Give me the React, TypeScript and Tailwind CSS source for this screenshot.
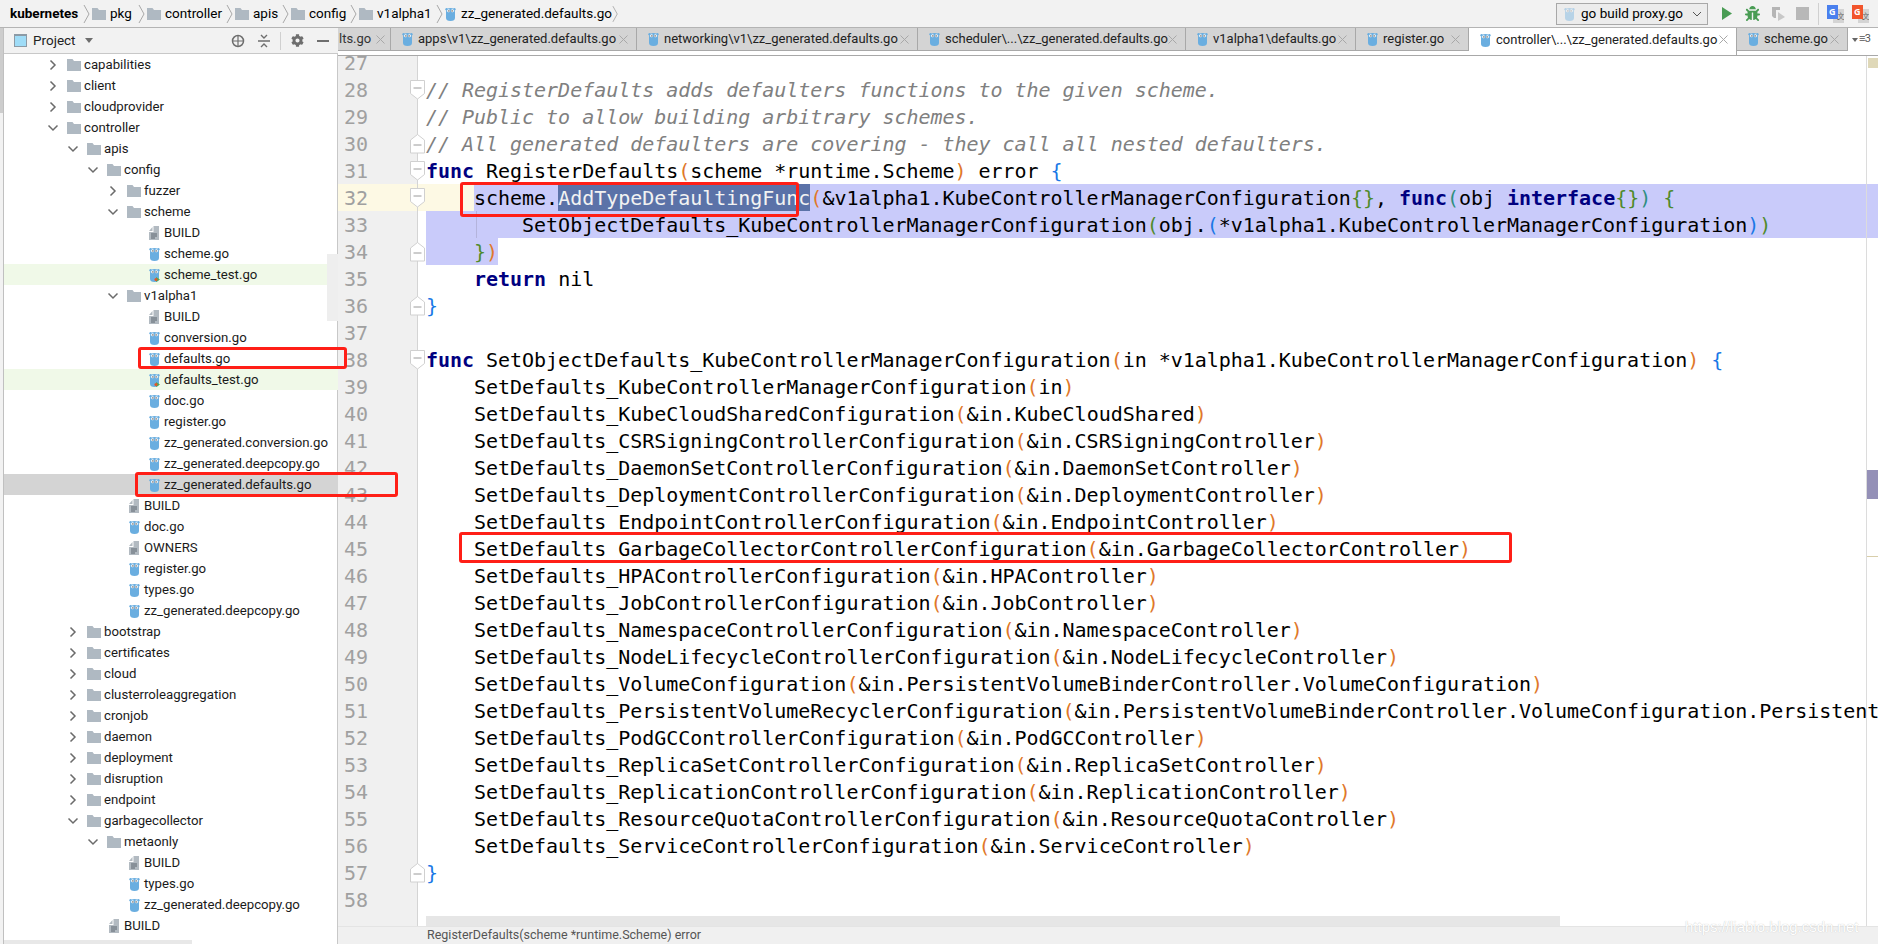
import { FaBug, FaCog } from "react-icons/fa";

const UI = "font-['Roboto',sans-serif]";

function Gopher({ test, faded }: { test?: boolean; faded?: boolean }) {
  return (
    <svg width="11" height="14" viewBox="0 0 11 14" className={faded ? "shrink-0 opacity-40" : "shrink-0"}>
      <circle cx="1.6" cy="2.2" r="1.2" fill="#6aaee0" />
      <circle cx="9.4" cy="2.2" r="1.2" fill="#6aaee0" />
      <path d="M1 4.500C1 2 3 1 5.500 1S10 2 10 4.500V11c0 2-1.500 3-4.500 3S1 13 1 11Z" fill="#6aaee0" />
      <circle cx="3.6" cy="3.8" r="1.5" fill="#fff" />
      <circle cx="7.4" cy="3.8" r="1.5" fill="#fff" />
      <circle cx="3.9" cy="3.9" r=".7" fill="#333" />
      <circle cx="7.1" cy="3.9" r=".7" fill="#333" />
      {test && <path d="M7 9l4 2.500L7 14Z" fill="#4caf50" />}
      {test && <circle cx="7" cy="11.5" r="1.6" fill="#e0562b" />}
    </svg>
  );
}

function Folder() {
  return (
    <svg width="14" height="12" viewBox="0 0 14 12" className="shrink-0">
      <path d="M0 0h5.500l1.500 2H14v10H0Z" fill="#afb9c2" />
    </svg>
  );
}

function FileIcon() {
  return (
    <svg width="14" height="14" viewBox="0 0 14 14" className="shrink-0">
      <path d="M2 5 5.500 1V5ZM6.500 0H12v14H2V6h4.500Z" fill="#b2bac1" />
      <path d="M4 8h6M4 10h6M4 12h4" stroke="#5d6670" strokeWidth="1" />
    </svg>
  );
}

function Chevron({ open }: { open?: boolean }) {
  return (
    <svg width="12" height="12" viewBox="0 0 12 12" className="shrink-0">
      {open ? (
        <path d="M1.500 3.500 6 8l4.500-4.500" fill="none" stroke="#6b6b6b" strokeWidth="1.500" />
      ) : (
        <path d="M3.500 1.500 8 6l-4.500 4.500" fill="none" stroke="#6b6b6b" strokeWidth="1.500" />
      )}
    </svg>
  );
}

function Crumb({ name, w, bold, icon }: { name: string; w: number; bold?: boolean; icon?: "folder" | "go" }) {
  return (
    <div className="flex items-center shrink-0" style={{ width: w }}>
      {icon === "folder" && <Folder />}
      {icon === "go" && <Gopher />}
      <span className={bold ? "ml-[10px] font-bold text-black" : icon === "go" ? "ml-[5px] text-black" : "ml-[4px] text-black"}>{name}</span>
      <svg width="8" height="20" viewBox="0 0 8 20" className="ml-auto mr-[1px]">
        <path d="M1 1l5 9-5 9" fill="none" stroke="#a8a8a8" strokeWidth="1" />
      </svg>
    </div>
  );
}

function TopBar() {
  return (
    <div className={`h-[28px] shrink-0 flex items-center bg-[#f2f2f2] border-b border-[#b4b4b4] text-[13.500px] ${UI}`}>
      <Crumb name="kubernetes" w={92} bold />
      <Crumb name="pkg" w={55} icon="folder" />
      <Crumb name="controller" w={88} icon="folder" />
      <Crumb name="apis" w={56} icon="folder" />
      <Crumb name="config" w={68} icon="folder" />
      <Crumb name="v1alpha1" w={86} icon="folder" />
      <Crumb name="zz_generated.defaults.go" w={175} icon="go" />
      <div className="ml-auto flex items-center pr-[9px]">
        <div className="w-[152px] h-[22px] flex items-center bg-[#ececec] border border-[#a8a8a8] pl-[7px]">
          <Gopher faded />
          <span className="ml-[6px] text-[13.500px] text-black whitespace-nowrap">go build proxy.go</span>
          <svg width="10" height="6" viewBox="0 0 10 6" className="ml-auto mr-[5px]">
            <path d="M1 1l4 4 4-4" fill="none" stroke="#555" strokeWidth="1" />
          </svg>
        </div>
        <svg width="12" height="15" viewBox="0 0 12 15" className="ml-[13px]">
          <path d="M1 1l10 6.500L1 14Z" fill="#499c54" />
        </svg>
        <FaBug className="ml-[12px] text-[15px] text-[#499c54]" />
        <svg width="16" height="16" viewBox="0 0 16 16" className="ml-[10px]">
          <path d="M2 1h8v3H6v8H4L2 10Z" fill="#b5b5b5" />
          <path d="M8 6l7 5-7 4Z" fill="#c8c8c8" />
        </svg>
        <div className="ml-[10px] w-[13px] h-[13px] bg-[#b8b8b8]" />
        <div className="ml-[9px] w-[1px] h-[22px] bg-[#d0d0d0]" />
        <Translate color="#4a80ee" />
        <Translate color="#f2552c" />
      </div>
    </div>
  );
}

function Translate({ color }: { color: string }) {
  return (
    <svg width="17" height="18" viewBox="0 0 17 18" className="ml-[8px]">
      <rect x="6" y="4" width="11" height="14" fill="#d4d4d4" />
      <text x="10" y="14" fontSize="8" fill="#666" fontFamily="Noto Sans">文</text>
      <rect width="11" height="14" fill={color} />
      <text x="2" y="10" fontSize="9" fontWeight="700" fill="#fff" fontFamily="Noto Sans">G</text>
    </svg>
  );
}

const rows: [number, "d" | "o" | "f" | "g" | "t", string][] = [
  [0, "d", "capabilities"],
  [0, "d", "client"],
  [0, "d", "cloudprovider"],
  [0, "o", "controller"],
  [1, "o", "apis"],
  [2, "o", "config"],
  [3, "d", "fuzzer"],
  [3, "o", "scheme"],
  [4, "f", "BUILD"],
  [4, "g", "scheme.go"],
  [4, "t", "scheme_test.go"],
  [3, "o", "v1alpha1"],
  [4, "f", "BUILD"],
  [4, "g", "conversion.go"],
  [4, "g", "defaults.go"],
  [4, "t", "defaults_test.go"],
  [4, "g", "doc.go"],
  [4, "g", "register.go"],
  [4, "g", "zz_generated.conversion.go"],
  [4, "g", "zz_generated.deepcopy.go"],
  [4, "g", "zz_generated.defaults.go"],
  [3, "f", "BUILD"],
  [3, "g", "doc.go"],
  [3, "f", "OWNERS"],
  [3, "g", "register.go"],
  [3, "g", "types.go"],
  [3, "g", "zz_generated.deepcopy.go"],
  [1, "d", "bootstrap"],
  [1, "d", "certificates"],
  [1, "d", "cloud"],
  [1, "d", "clusterroleaggregation"],
  [1, "d", "cronjob"],
  [1, "d", "daemon"],
  [1, "d", "deployment"],
  [1, "d", "disruption"],
  [1, "d", "endpoint"],
  [1, "o", "garbagecollector"],
  [2, "o", "metaonly"],
  [3, "f", "BUILD"],
  [3, "g", "types.go"],
  [3, "g", "zz_generated.deepcopy.go"],
  [2, "f", "BUILD"],
];

function Sidebar() {
  return (
    <div className={`w-[334px] shrink-0 flex flex-col overflow-hidden relative text-[13.200px] text-[#1a1a1a] ${UI}`}>
      <div className="h-[26px] shrink-0 flex items-center bg-[#f2f2f2] border-b border-[#c8c8c8] text-[#6e6e6e] pr-[9px]">
        <div className="ml-[10px] w-[13px] h-[13px] border border-[#8c9aa5] bg-[#9fdcf7] border-t-[2px]" />
        <span className="ml-[6px] text-[13.500px] text-[#222]">Project</span>
        <svg width="8" height="5" viewBox="0 0 8 5" className="ml-[9px]">
          <path d="M0 0h8L4 5Z" fill="#6e6e6e" />
        </svg>
        <svg width="14" height="14" viewBox="0 0 14 14" className="ml-auto">
          <circle cx="7" cy="7" r="5.500" fill="none" stroke="#6e6e6e" strokeWidth="1.500" />
          <path d="M7 1v12M1 7h12" stroke="#6e6e6e" strokeWidth="1.200" />
        </svg>
        <svg width="14" height="14" viewBox="0 0 14 14" className="ml-[12px]">
          <path d="M1 7h12M4 1l3 3 3-3M4 13l3-3 3 3" fill="none" stroke="#6e6e6e" strokeWidth="1.400" />
        </svg>
        <div className="ml-[9px] w-[1px] h-[18px] bg-[#d0d0d0]" />
        <FaCog className="ml-[10px] text-[13px]" />
        <div className="ml-[13px] w-[12px] h-[2px] bg-[#6e6e6e]" />
      </div>
      <div className="flex-1 overflow-hidden">
        {rows.map(([lvl, kind, name], i) => (
          <div
            key={i}
            className={
              i === 20
                ? "h-[21px] flex items-center bg-[#d4d4d4]"
                : kind === "t"
                  ? "h-[21px] flex items-center bg-[#f0f9e8]"
                  : "h-[21px] flex items-center"
            }
            style={{ paddingLeft: 42.5 + lvl * 20 }}
          >
            <div className="w-[20px] shrink-0">{(kind === "d" || kind === "o") && <Chevron open={kind === "o"} />}</div>
            <div className="w-[17.500px] shrink-0 flex">
              {kind === "d" || kind === "o" ? <Folder /> : kind === "f" ? <FileIcon /> : <div className="pl-[2px]"><Gopher test={kind === "t"} /></div>}
            </div>
            <span className="whitespace-pre">{name}</span>
          </div>
        ))}
      </div>
      <div className="absolute right-0 top-[226px] w-[11px] h-[67px] bg-[#eeeeee]" />
      <div className="absolute left-0 bottom-0 w-[188px] h-[4px] bg-[#e8e8e8]" />
    </div>
  );
}

const tabs: [string, number, boolean?][] = [
  ["apps\\v1\\zz_generated.defaults.go", 246],
  ["networking\\v1\\zz_generated.defaults.go", 281],
  ["scheduler\\...\\zz_generated.defaults.go", 268],
  ["v1alpha1\\defaults.go", 170],
  ["register.go", 113],
  ["controller\\...\\zz_generated.defaults.go", 268, true],
  ["scheme.go", 111],
];

function Close() {
  return (
    <svg width="9" height="9" viewBox="0 0 9 9" className="shrink-0">
      <path d="M.5.5l8 8M8.500.5l-8 8" stroke="#a8a8a8" strokeWidth="1" />
    </svg>
  );
}

function Tabs() {
  return (
    <div className={`h-[28px] shrink-0 flex items-start border-b border-[#a8a8a8] text-[13px] text-[#222] ${UI}`}>
      <div className="w-[53px] h-[23px] shrink-0 flex items-center pl-[1px] gap-[5px] bg-[#d4d4d4] border-b border-r border-[#a8a8a8]">
        <span className="text-[#333]">lts.go</span>
        <Close />
      </div>
      {tabs.map(([name, w, active]) => (
        <div
          key={name}
          className={
            active
              ? "h-[27px] pb-[4px] shrink-0 flex items-center pl-[11px] bg-white border-r border-[#a8a8a8]"
              : "h-[23px] shrink-0 flex items-center pl-[11px] bg-[#d4d4d4] border-b border-r border-[#a8a8a8]"
          }
          style={{ width: w }}
        >
          <Gopher />
          <span className="ml-[5px] flex-1 whitespace-pre">{name}</span>
          <span className="mr-[8px]"><Close /></span>
        </div>
      ))}
      <div className="flex-1 h-[23px] flex items-center pl-[4px] text-[11px] text-[#555] bg-white">
        <svg width="6" height="4" viewBox="0 0 6 4" className="mr-[1px]"><path d="M0 0h6L3 4Z" fill="#666" /></svg>
        <span className="tracking-tighter">≡3</span>
      </div>
    </div>
  );
}

const K = "font-bold text-[#000080]";
const C = "italic text-[#808080]";
const O = "text-[#e0782a]";
const G = "text-[#4f8a2a]";
const B = "text-[#1a78e6]";
const T = "text-[#2f8f7f]";

type Seg = string | [string, string];

function Segs({ items }: { items: Seg[] }) {
  return (
    <>
      {items.map((s, i) =>
        typeof s === "string" ? <span key={i}>{s}</span> : <span key={i} className={s[1]}>{s[0]}</span>,
      )}
    </>
  );
}

function call(name: string, arg: string): Seg[] {
  return ["    " + name, ["(", O], arg, [")", O]];
}

const lines: Record<number, Seg[]> = {
  28: [["// RegisterDefaults adds defaulters functions to the given scheme.", C]],
  29: [["// Public to allow building arbitrary schemes.", C]],
  30: [["// All generated defaulters are covering - they call all nested defaulters.", C]],
  31: [["func", K], " RegisterDefaults", ["(", O], "scheme *runtime.Scheme", [")", O], " error ", ["{", B]],
  35: ["    ", ["return", K], " nil"],
  36: [["}", B]],
  38: [["func", K], " SetObjectDefaults_KubeControllerManagerConfiguration", ["(", O], "in *v1alpha1.KubeControllerManagerConfiguration", [")", O], " ", ["{", B]],
  39: call("SetDefaults_KubeControllerManagerConfiguration", "in"),
  40: call("SetDefaults_KubeCloudSharedConfiguration", "&in.KubeCloudShared"),
  41: call("SetDefaults_CSRSigningControllerConfiguration", "&in.CSRSigningController"),
  42: call("SetDefaults_DaemonSetControllerConfiguration", "&in.DaemonSetController"),
  43: call("SetDefaults_DeploymentControllerConfiguration", "&in.DeploymentController"),
  44: call("SetDefaults_EndpointControllerConfiguration", "&in.EndpointController"),
  45: call("SetDefaults_GarbageCollectorControllerConfiguration", "&in.GarbageCollectorController"),
  46: call("SetDefaults_HPAControllerConfiguration", "&in.HPAController"),
  47: call("SetDefaults_JobControllerConfiguration", "&in.JobController"),
  48: call("SetDefaults_NamespaceControllerConfiguration", "&in.NamespaceController"),
  49: call("SetDefaults_NodeLifecycleControllerConfiguration", "&in.NodeLifecycleController"),
  50: call("SetDefaults_VolumeConfiguration", "&in.PersistentVolumeBinderController.VolumeConfiguration"),
  51: ["    SetDefaults_PersistentVolumeRecyclerConfiguration", ["(", O], "&in.PersistentVolumeBinderController.VolumeConfiguration.Persistent"],
  52: call("SetDefaults_PodGCControllerConfiguration", "&in.PodGCController"),
  53: call("SetDefaults_ReplicaSetControllerConfiguration", "&in.ReplicaSetController"),
  54: call("SetDefaults_ReplicationControllerConfiguration", "&in.ReplicationController"),
  55: call("SetDefaults_ResourceQuotaControllerConfiguration", "&in.ResourceQuotaController"),
  56: call("SetDefaults_ServiceControllerConfiguration", "&in.ServiceController"),
  57: [["}", B]],
};

const foldDown = [28, 31, 32, 38];
const foldUp = [30, 34, 36, 57];

function Fold({ up }: { up: boolean }) {
  return (
    <svg width="15" height="20" viewBox="0 0 15 20" className="absolute left-[72px] top-[4px]">
      <path
        d={up ? "M.5 6 7.500.5 14.500 6v13H.5Z" : "M.5.5h14v13L7.500 19 .5 13.500Z"}
        fill="#fff"
        stroke="#d0d0d0"
      />
      <path d={up ? "M3.500 11h8" : "M3.500 8h8"} stroke="#9a9a9a" />
    </svg>
  );
}

function Line({ n }: { n: number }) {
  const gutterBg = n === 32 ? "bg-[#fdf9e4]" : "bg-[#f0f0f0]";
  return (
    <div className="h-[27px] flex relative">
      <div className={`w-[80px] shrink-0 pl-[6px] text-[#a0a0a0] border-r border-[#d4d4d4] ${gutterBg}`}>
        {n <= 58 ? n : ""}
      </div>
      {foldDown.includes(n) && <Fold up={false} />}
      {foldUp.includes(n) && <Fold up={true} />}
      {n === 32 ? (
        <div className="flex-1 flex pl-[8px] bg-[#fdf9e4]">
          <span>{"    "}</span>
          <div className="flex-1 bg-[#c9cbfa] text-black">
            <span>scheme.</span>
            <span className="inline-block h-[27px] align-top bg-[#5b72a8] text-[#f2f2f2]">AddTypeDefaultingFunc</span>
            <Segs
              items={[
                ["(", O],
                "&v1alpha1.KubeControllerManagerConfiguration",
                ["{}", G],
                ", ",
                ["func", K],
                ["(", T],
                "obj ",
                ["interface", K],
                ["{}", G],
                [")", T],
                " ",
                ["{", G],
              ]}
            />
          </div>
        </div>
      ) : n === 33 ? (
        <div className="flex-1 pl-[8px]">
          <div className="h-[27px] bg-[#c9cbfa] relative">
            <div className="absolute left-[50px] top-0 h-[27px] w-[1px] bg-[#b4b4dc]" />
            <Segs
              items={[
                "        SetObjectDefaults_KubeControllerManagerConfiguration",
                ["(", G],
                "obj.",
                ["(", B],
                "*v1alpha1.KubeControllerManagerConfiguration",
                [")", B],
                [")", G],
              ]}
            />
          </div>
        </div>
      ) : n === 34 ? (
        <div className="flex-1 pl-[8px]">
          <span className="inline-block h-[27px] align-top bg-[#c9cbfa]">
            <Segs items={["    ", ["}", G], [")", O]]} />
          </span>
        </div>
      ) : (
        <div className="flex-1 pl-[8px] text-black">
          <Segs items={lines[n] ?? []} />
        </div>
      )}
    </div>
  );
}

function Editor() {
  const nums: number[] = [];
  for (let i = 27; i <= 59; i++) nums.push(i);
  return (
    <div className="flex-1 flex flex-col min-w-0">
      <Tabs />
      <div className="flex-1 min-h-0 relative overflow-hidden">
        <div className="-mt-[7px] font-['DejaVu_Sans_Mono',monospace] text-[20px] tracking-[-0.03px] leading-[29px] whitespace-pre">
          {nums.map((n) => (
            <Line key={n} n={n} />
          ))}
        </div>
        <div className="absolute left-[88px] bottom-0 w-[1134px] h-[10px] bg-[#e6e6e6]" />
        {/* error stripe sits on top of long lines */}
        <div className="absolute right-0 top-0 bottom-0 w-[12px] flex flex-col border-l border-[#dcdcdc]">
          <div className="mt-[2px] ml-[1px] h-[10px] bg-[#dfd8b8]" />
          <div className="mt-[402px] h-[29px] bg-[#9490b7]" />
          <div className="mt-[57px] h-[1px] bg-[#d8ceaa]" />
        </div>
      </div>
      <div className={`h-[18px] shrink-0 flex items-center bg-[#f0f0f0] border-t border-[#e4e4e4] pl-[89px] text-[12.500px] text-[#555] ${UI}`}>
        RegisterDefaults(scheme *runtime.Scheme) error
      </div>
    </div>
  );
}

function Red({ cls }: { cls: string }) {
  return <div className={`absolute border-[3px] border-[#ff1f17] rounded-[3px] ${cls}`} />;
}

export default function App() {
  return (
    <div className="relative w-[1878px] h-[944px] overflow-hidden flex flex-col bg-white">
      <TopBar />
      <div className="flex-1 flex min-h-0">
        <div className="w-[4px] shrink-0 bg-[#f2f2f2] border-r border-[#c0c0c0]">
          <div className="w-[3px] h-[85px] bg-[#cdcdcd]" />
        </div>
        <Sidebar />
        <div className="w-[1px] shrink-0 bg-[#c8c8c8] -ml-[1px]" />
        <Editor />
      </div>
      <Red cls="left-[460px] top-[182px] w-[339px] h-[35px]" />
      <Red cls="left-[138px] top-[347px] w-[209px] h-[22px]" />
      <Red cls="left-[135px] top-[472px] w-[263px] h-[25px]" />
      <Red cls="left-[459px] top-[532px] w-[1053px] h-[31px]" />
      <div className="absolute left-[1685px] top-[916px] font-['Liberation_Sans',sans-serif] text-[15px] text-white [text-shadow:0_0_1px_#b8b8b8]">
        https://liabio.blog.csdn.net
      </div>
    </div>
  );
}
